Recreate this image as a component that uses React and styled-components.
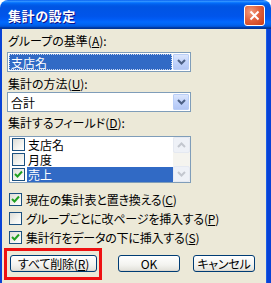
import React from 'react';
import styled, { createGlobalStyle } from 'styled-components';

const GlobalStyle = createGlobalStyle`
  html, body { margin: 0; padding: 0; background: #ffffff; }
  body {
    font-family: "MS UI Gothic", "Noto Sans CJK JP", "Noto Sans", sans-serif;
    font-size: 12px;
    font-feature-settings: "palt";
  }
`;

const Window = styled.div`
  width: 271px;
  height: 283px;
  display: flex;
  flex-direction: column;
  border-radius: 8px 8px 0 0;
  overflow: hidden;
`;

const TitleBar = styled.div`
  height: 29px;
  flex: none;
  display: flex;
  align-items: center;
  justify-content: space-between;
  padding: 0 6px 0 8px;
  background: linear-gradient(to bottom, #0058ee 0%, #3593ff 4%, #288eff 6%, #127dff 8%, #036ffc 10%, #0262ee 14%, #0057e5 20%, #0054e3 24%, #0055eb 56%, #005bf5 66%, #026afe 76%, #0062ef 86%, #0052d6 92%, #0040ab 94%, #003092 100%);
`;

const Title = styled.div`
  color: #ffffff;
  font-size: 13px;
  font-weight: bold;
  letter-spacing: 0.6px;
  text-shadow: 1px 1px 0 #0f1089;
  margin-top: 1px;
`;

const CloseButton = styled.div`
  width: 19px;
  height: 19px;
  border: 1px solid #ffffff;
  border-radius: 3px;
  background: radial-gradient(circle at 30% 30%, #f29c7d 0%, #e2633f 45%, #c83a15 100%);
  display: flex;
  align-items: center;
  justify-content: center;
  margin-top: 2px;
`;

const Body = styled.div`
  flex: 1;
  background: #ece9d8;
  border-left: 2px solid #0842d6;
  border-right: 4px solid #0842d6;
  box-shadow: inset -1px 0 0 #1a5ee6;
  padding-left: 6px;
  display: flex;
  flex-direction: column;
  align-items: flex-start;
`;

const Label = styled.div`
  height: 14px;
  line-height: 14px;
  color: #000000;
  margin-top: ${p => p.$mt}px;
  white-space: nowrap;
`;

const Combo = styled.div`
  width: 184px;
  height: 20px;
  box-sizing: border-box;
  margin-top: ${p => p.$mt}px;
  margin-left: -1px;
  border: 1px solid #7f9db9;
  background: #ffffff;
  display: flex;
  align-items: stretch;
  padding: 1px;
`;

const ComboValue = styled.div`
  flex: 1;
  display: flex;
  align-items: center;
  padding-left: 2px;
  margin-right: 1px;
  color: ${p => (p.$selected ? '#ffffff' : '#000000')};
  background: ${p => (p.$selected ? '#316ac5' : 'transparent')};
  outline: ${p => (p.$selected ? '1px dotted #c9d6ee' : 'none')};
  outline-offset: -1px;
`;

const DropButton = styled.div`
  width: 16px;
  box-sizing: border-box;
  border: 1px solid #b9cef7;
  border-radius: 1px;
  background: linear-gradient(to bottom, #dce6fd 0%, #c2d4fb 50%, #b3c7f5 100%);
  display: flex;
  align-items: center;
  justify-content: center;
`;

const ListBox = styled.div`
  width: 182px;
  height: 47px;
  box-sizing: border-box;
  margin-top: ${p => p.$mt}px;
  margin-left: 1px;
  border: 1px solid #7f9db9;
  background: #ffffff;
  display: flex;
`;

const ListItems = styled.div`
  flex: 1;
  display: flex;
  flex-direction: column;
`;

const ListRow = styled.div`
  height: 15px;
  display: flex;
  align-items: center;
  padding-left: 2px;
  overflow: hidden;
`;

const ListText = styled.div`
  flex: 1;
  height: 15px;
  line-height: 15px;
  margin-left: 2px;
  padding-left: 1px;
  overflow: hidden;
  color: ${p => (p.$selected ? '#ffffff' : '#000000')};
  background: ${p => (p.$selected ? '#316ac5' : 'transparent')};
`;

const ScrollBar = styled.div`
  width: 17px;
  display: flex;
  flex-direction: column;
  background: #f5f4ef;
`;

const ScrollButton = styled.div`
  height: 16px;
  box-sizing: border-box;
  border: 1px solid #e5e9f1;
  border-radius: 2px;
  background: #eef1f7;
  display: flex;
  align-items: center;
  justify-content: center;
`;

const ScrollTrack = styled.div`
  flex: 1;
`;

const CheckBox = styled.div`
  width: 13px;
  height: 13px;
  flex: none;
  box-sizing: border-box;
  border: 1px solid #1c5180;
  background: linear-gradient(135deg, #dcdcd7 0%, #f4f4f0 60%, #ffffff 100%);
  display: flex;
  align-items: center;
  justify-content: center;
`;

const OptionRow = styled.div`
  height: 16px;
  display: flex;
  align-items: center;
  gap: 4px;
  margin-top: ${p => p.$mt}px;
  margin-left: 1px;
  white-space: nowrap;
  letter-spacing: -0.2px;
`;

const ButtonRow = styled.div`
  display: flex;
  margin-top: 10px;
  margin-left: 2px;
`;

const Button = styled.div`
  width: ${p => p.$w}px;
  height: 17px;
  box-sizing: border-box;
  margin-left: ${p => p.$ml || 0}px;
  border: 1px solid #003c74;
  border-radius: 3px;
  background: linear-gradient(to bottom, #ffffff 0%, #f3f3ef 60%, #e5e4de 90%, #d6d0c5 100%);
  display: flex;
  align-items: center;
  justify-content: center;
  color: #000000;
  white-space: nowrap;
  letter-spacing: -0.2px;
`;

const Highlight = styled.div`
  position: relative;
`;

const RedFrame = styled.div`
  position: absolute;
  left: -6px;
  top: -7px;
  right: -5px;
  bottom: -8px;
  border: 3px solid #ee1111;
  pointer-events: none;
`;

const Chevron = ({ color = '#4d6185', up = false }) => (
  <svg width="9" height="6" viewBox="0 0 9 6">
    <polyline
      points={up ? '1,5 4.5,1.5 8,5' : '1,1 4.5,4.5 8,1'}
      fill="none"
      stroke={color}
      strokeWidth="2"
    />
  </svg>
);

const Tick = () => (
  <svg width="9" height="9" viewBox="0 0 9 9">
    <polyline points="1,4 3.5,6.5 8,1.5" fill="none" stroke="#21a121" strokeWidth="2" />
  </svg>
);

const Check = ({ checked }) => <CheckBox>{checked && <Tick />}</CheckBox>;

const fields = [
  { name: '支店名', checked: false },
  { name: '月度', checked: false },
  { name: '売上', checked: true, selected: true },
];

export default function App() {
  return (
    <>
      <GlobalStyle />
      <Window>
        <TitleBar>
          <Title>集計の設定</Title>
          <CloseButton>
            <svg width="11" height="11" viewBox="0 0 11 11">
              <path d="M1.5 1.5 L9.5 9.5 M9.5 1.5 L1.5 9.5" stroke="#ffffff" strokeWidth="2" />
            </svg>
          </CloseButton>
        </TitleBar>
        <Body>
          <Label $mt={5}>グループの基準(<u>A</u>):</Label>
          <Combo $mt={4}>
            <ComboValue $selected>支店名</ComboValue>
            <DropButton><Chevron /></DropButton>
          </Combo>

          <Label $mt={5}>集計の方法(<u>U</u>):</Label>
          <Combo $mt={1}>
            <ComboValue>合計</ComboValue>
            <DropButton><Chevron /></DropButton>
          </Combo>

          <Label $mt={4}>集計するフィールド(<u>D</u>):</Label>
          <ListBox $mt={6}>
            <ListItems>
              {fields.map((f, i) => (
                <ListRow key={i}>
                  <Check checked={f.checked} />
                  <ListText $selected={f.selected}>{f.name}</ListText>
                </ListRow>
              ))}
            </ListItems>
            <ScrollBar>
              <ScrollButton><Chevron color="#c3c7cf" up /></ScrollButton>
              <ScrollTrack />
              <ScrollButton><Chevron color="#c3c7cf" /></ScrollButton>
            </ScrollBar>
          </ListBox>

          <OptionRow $mt={8}>
            <Check checked />
            <span>現在の集計表と置き換える(<u>C</u>)</span>
          </OptionRow>
          <OptionRow $mt={3}>
            <Check />
            <span>グループごとに改ページを挿入する(<u>P</u>)</span>
          </OptionRow>
          <OptionRow $mt={3}>
            <Check checked />
            <span>集計行をデータの下に挿入する(<u>S</u>)</span>
          </OptionRow>

          <ButtonRow>
            <Highlight>
              <Button $w={87}>すべて削除(<u>R</u>)</Button>
              <RedFrame />
            </Highlight>
            <Button $w={62} $ml={21}>OK</Button>
            <Button $w={62} $ml={13}>キャンセル</Button>
          </ButtonRow>
        </Body>
      </Window>
    </>
  );
}
